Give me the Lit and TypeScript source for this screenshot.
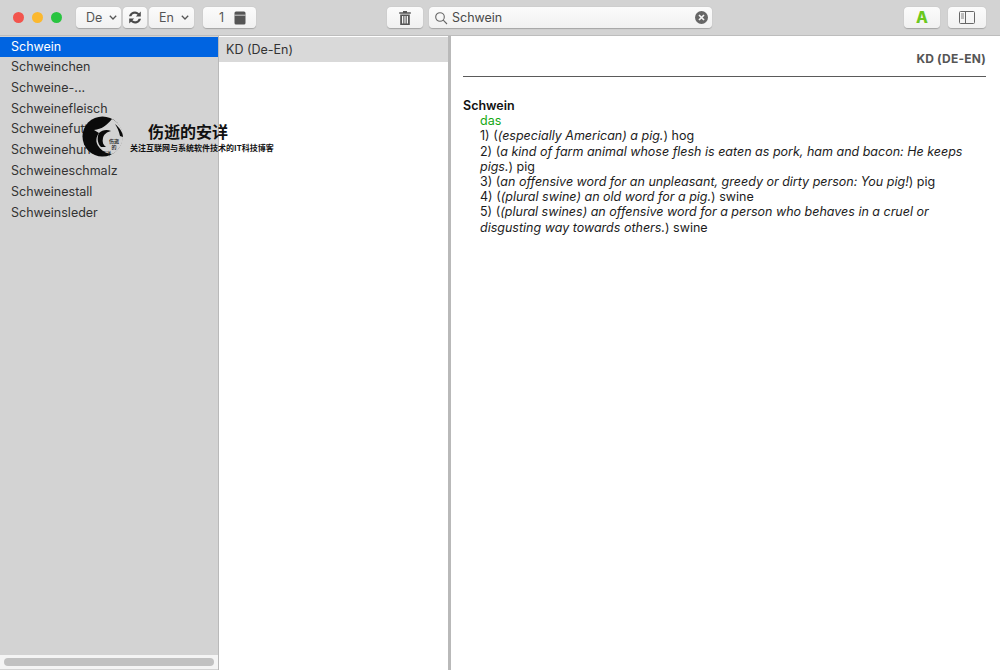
import { LitElement, html, css } from "lit";
import { customElement } from "lit/decorators.js";

const WORDS = ["Schwein","Schweinchen","Schweine-...","Schweinefleisch","Schweinefutter","Schweinehund","Schweineschmalz","Schweinestall","Schweinsleder"];

@customElement("app-root")
export class AppRoot extends LitElement {
  static styles = css`
    :host { display: block; width: 1000px; height: 670px; position: relative; overflow: hidden; font-family: Inter, "Liberation Sans", sans-serif; font-size: 12.5px; color: #2b2b2b; background: #fff; }
    .win { display: flex; flex-direction: column; height: 670px; }
    .bar { height: 36px; flex: none; box-sizing: border-box; background: #d3d3d3; border-bottom: 1px solid #bdbdbd; display: flex; align-items: center; padding: 0 14px 0 13px; }
    .light { width: 11px; height: 11px; border-radius: 50%; margin-right: 8px; flex: none; }
    .btn { height: 21px; margin-top: 0; background: linear-gradient(#fbfbfb,#f1f1f1); border-radius: 4px; box-shadow: 0 0.5px 1px rgba(0,0,0,.22); display: flex; align-items: center; justify-content: center; color: #555; flex: none; box-sizing: border-box; }
    .sel { justify-content: flex-start; padding-left: 10px; gap: 7px; width: 45px; }
    .search { width: 283px; margin-left: 6px; justify-content: flex-start; padding: 0 4px 0 5px; gap: 4px; }
    .search span { flex: 1; color: #4a4a4a; }
    .body { flex: 1; display: flex; min-height: 0; background: #b9b9b9; }
    .left { width: 218px; flex: none; background: #d3d3d3; display: flex; flex-direction: column; padding-top: 1px; box-sizing: border-box; margin-right: 1px; }
    .list { flex: 1; }
    .row { height: 20.8px; line-height: 20px; padding-left: 11px; color: #333; white-space: nowrap; }
    .row.on { background: #0064e1; color: #fff; height: 20px; }
    .scroll { height: 14px; background: #f4f4f4; flex: none; display: flex; align-items: center; padding: 0 4px; box-sizing: border-box; margin-bottom: 1px; }
    .scroll i { display: block; height: 8px; flex: 1; border-radius: 4px; background: #c1c1c1; }
    .mid { width: 229px; flex: none; background: #fff; margin-right: 3px; padding-top: 1px; box-sizing: border-box; }
    .mid div { height: 25px; background: #d9d9d9; line-height: 26px; padding-left: 7px; color: #333; }
    .right { flex: 1; background: #fff; padding: 1px 14px 0 12px; box-sizing: border-box; color: #1c1c1c; }
    .head { text-align: right; font-weight: 700; font-size: 12px; color: #555; height: 39px; line-height: 44px; border-bottom: 1px solid #5a5a5a; letter-spacing: 0.2px; }
    .entry { margin-top: 21px; line-height: 15.2px; }
    .entry b { font-weight: 600; color: #111; display: block; }
    .ind { padding-left: 17px; }
    .das { color: #14a814; }
    .mark { position: absolute; left: 82px; top: 116px; width: 180px; height: 40px; pointer-events: none; }
    .mark svg { position: absolute; left: 0; top: 0; }
    .t1 { position: absolute; left: 66px; top: 5px; font: 700 16px "Noto Sans CJK SC", sans-serif; color: #111; line-height: 20px; white-space: nowrap; }
    .t2 { position: absolute; left: 48px; top: 26px; font: 700 8px "Noto Sans CJK SC", sans-serif; color: #111; line-height: 11px; white-space: nowrap; }
    .t3 { position: absolute; font: 500 5px "Noto Sans CJK SC", sans-serif; color: #111; line-height: 6px; }
  `;

  render() {
    const chev = html`<svg width="8" height="5" viewBox="0 0 8 5"><path d="M.8.8 4 4l3.2-3.2" fill="none" stroke="#555" stroke-width="1.3"/></svg>`;
    return html`
      <div class="win">
        <div class="bar">
          <span class="light" style="background:#f2544d"></span>
          <span class="light" style="background:#fbb82e"></span>
          <span class="light" style="background:#29c440;margin-right:14px"></span>
          <div class="btn sel">De ${chev}</div>
          <div class="btn" style="width:24px;margin-left:2px">
            <svg width="16" height="15" viewBox="0 0 16 15"><path d="M2 6.3A6 6 0 0 1 12 3.2L13.8 1.5V6.6H8.8L10.6 4.8A3.8 3.8 0 0 0 4.3 6.3ZM14 8.7A6 6 0 0 1 4 11.8L2.2 13.5V8.4H7.2L5.4 10.2A3.8 3.8 0 0 0 11.7 8.7Z" fill="#4a4a4a"/></svg>
          </div>
          <div class="btn sel" style="margin-left:2px">En ${chev}</div>
          <div class="btn" style="width:53px;margin-left:9px;gap:10px;padding-left:6px">
            <span>1</span>
            <svg width="12" height="14" viewBox="0 0 12 14"><path d="M2 .5h8A1.5 1.5 0 0 1 11.500 2v10A1.500 1.500 0 0 1 10 13.500H2A1.500 1.500 0 0 1 .5 12V2A1.500 1.500 0 0 1 2 .5Z" fill="#555"/><path d="M.5 4.200h11" stroke="#eee" stroke-width=".8"/></svg>
          </div>
          <div class="btn" style="width:36px;margin-left:131px">
            <svg width="12" height="14" viewBox="0 0 12 14" fill="#555"><path d="M4 0h4v1.300h3.800v1.500H.2V1.300H4Z"/><path d="M1.200 3.500h9.600V14H1.200ZM3 5v7.500h1.300V5ZM5.400 5v7.500h1.200V5ZM7.700 5v7.500H9V5Z" fill-rule="evenodd"/></svg>
          </div>
          <div class="btn search">
            <svg width="14" height="14" viewBox="0 0 14 14" fill="none" stroke="#666" stroke-width="1.100"><circle cx="6" cy="6" r="4.300"/><path d="m9.200 9.200 3.800 3.800"/></svg>
            <span>Schwein</span>
            <svg width="13" height="13" viewBox="0 0 13 13"><circle cx="6.500" cy="6.500" r="6.500" fill="#666"/><path d="m4 4 5 5m0-5-5 5" stroke="#f4f4f4" stroke-width="1.700"/></svg>
          </div>
          <div style="flex:1"></div>
          <div class="btn" style="width:36px;font-weight:800;font-size:15.5px;color:#6cc81e">A</div>
          <div class="btn" style="width:38px;margin-left:8px">
            <svg width="16" height="13" viewBox="0 0 16 13" fill="none" stroke="#666"><rect x=".5" y=".5" width="15" height="12" rx="1"/><path d="M6.500 .5v12"/><path d="M2 3h3M2 5h3M2 7h3" stroke-width=".8"/></svg>
          </div>
        </div>
        <div class="body">
          <div class="left">
            <div class="list">${WORDS.map((w, i) => html`<div class="row ${i === 0 ? "on" : ""}">${w}</div>`)}</div>
            <div class="scroll"><i></i></div>
          </div>
          <div class="mid"><div>KD (De-En)</div></div>
          <div class="right">
            <div class="head">KD (DE-EN)</div>
            <div class="entry">
              <b>Schwein</b>
              <div class="ind">
                <div class="das">das</div>
                <div>1) (<i>(especially American) a pig.</i>) hog</div>
                <div>2) (<i>a kind of farm animal whose flesh is eaten as pork, ham and bacon: He keeps pigs.</i>) pig</div>
                <div>3) (<i>an offensive word for an unpleasant, greedy or dirty person: You pig!</i>) pig</div>
                <div>4) (<i>(plural swine) an old word for a pig.</i>) swine</div>
                <div>5) (<i>(plural swines) an offensive word for a person who behaves in a cruel or disgusting way towards others.</i>) swine</div>
              </div>
            </div>
          </div>
        </div>
      </div>
      <div class="mark">
        <svg width="42" height="42" viewBox="0 0 42 42">
          <circle cx="20.500" cy="20.500" r="20" fill="#0a0a0a"/>
          <path d="M30 3 C24 10 20 13 12 14 L17 17 C14 21 13 26 17 31 C19 34 24 38 30 38 C36 36 41 28 41 20 C41 12 36 6 30 3Z" fill="#d3d3d3"/>
          <path d="M33 8 C38 12 41 17 41 21 L38 20 C37 15 35 11 33 8Z" fill="#0a0a0a"/>
          <path d="M17 17 C20 14 25 13 29 15 C25 16 22 18 21 22 C20 26 21 29 24 31 L19 31 C15 27 15 21 17 17Z" fill="#0a0a0a"/>
        </svg>
        <span class="t3" style="left:26px;top:22px;text-align:center;width:12px">伤逝</span>
        <span class="t3" style="left:26px;top:28px;text-align:center;width:12px">的</span>
        <span class="t3" style="left:18px;top:34px;text-align:center;width:12px">安详</span>
        <span class="t1">伤逝的安详</span>
        <span class="t2">关注互联网与系统软件技术的IT科技博客</span>
      </div>
    `;
  }
}
